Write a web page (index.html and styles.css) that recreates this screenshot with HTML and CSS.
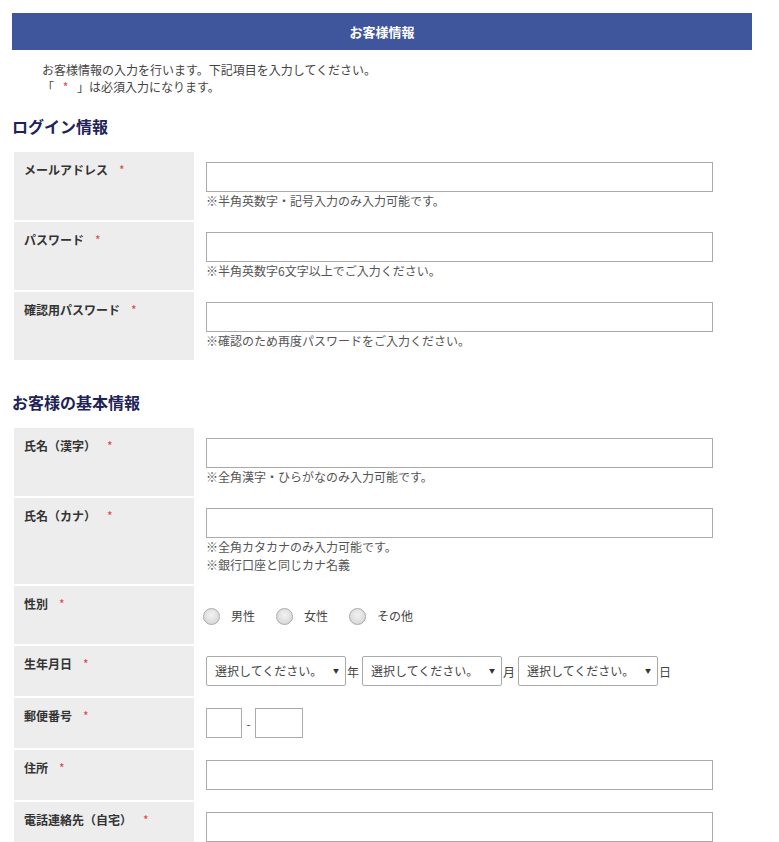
FILE: index.html
```html
<!DOCTYPE html>
<html lang="ja">
<head>
<meta charset="utf-8">
<title>お客様情報</title>
<link rel="stylesheet" href="styles.css">
</head>
<body>
<div class="page">
  <div class="title-bar">お客様情報</div>
  <div class="intro">
    <p>お客様情報の入力を行います。下記項目を入力してください。</p>
    <p>「 <span class="req-inline">*</span> 」は必須入力になります。</p>
  </div>

  <h2 class="section-title">ログイン情報</h2>
  <table class="form-table">
    <tr>
      <th>メールアドレス<span class="req">*</span></th>
      <td><input class="text-input" type="text"><p class="note">※半角英数字・記号入力のみ入力可能です。</p></td>
    </tr>
    <tr>
      <th>パスワード<span class="req">*</span></th>
      <td><input class="text-input" type="text"><p class="note">※半角英数字6文字以上でご入力ください。</p></td>
    </tr>
    <tr>
      <th>確認用パスワード<span class="req">*</span></th>
      <td><input class="text-input" type="text"><p class="note">※確認のため再度パスワードをご入力ください。</p></td>
    </tr>
  </table>

  <h2 class="section-title second">お客様の基本情報</h2>
  <table class="form-table">
    <tr>
      <th>氏名（漢字）<span class="req">*</span></th>
      <td><input class="text-input" type="text"><p class="note">※全角漢字・ひらがなのみ入力可能です。</p></td>
    </tr>
    <tr>
      <th>氏名（カナ）<span class="req">*</span></th>
      <td><input class="text-input" type="text"><p class="note">※全角カタカナのみ入力可能です。</p><p class="note">※銀行口座と同じカナ名義</p></td>
    </tr>
    <tr>
      <th>性別<span class="req">*</span></th>
      <td>
        <div class="radios">
          <label class="radio"><span class="radio-dot"></span>男性</label>
          <label class="radio"><span class="radio-dot"></span>女性</label>
          <label class="radio"><span class="radio-dot"></span>その他</label>
        </div>
      </td>
    </tr>
    <tr>
      <th>生年月日<span class="req">*</span></th>
      <td>
        <div class="date-row">
          <span class="select">選択してください。</span><span class="unit">年</span>
          <span class="select">選択してください。</span><span class="unit">月</span>
          <span class="select">選択してください。</span><span class="unit">日</span>
        </div>
      </td>
    </tr>
    <tr>
      <th>郵便番号<span class="req">*</span></th>
      <td>
        <div class="zip-row">
          <input class="text-input zip1" type="text"><span class="dash">-</span><input class="text-input zip2" type="text">
        </div>
      </td>
    </tr>
    <tr>
      <th>住所<span class="req">*</span></th>
      <td><input class="text-input" type="text"></td>
    </tr>
    <tr>
      <th>電話連絡先（自宅）<span class="req">*</span></th>
      <td><input class="text-input" type="text"></td>
    </tr>
  </table>
</div>
</body>
</html>
```

FILE: styles.css
```css
* { box-sizing: border-box; }
html, body { margin: 0; padding: 0; background: #fff; }
body {
  font-family: "Noto Sans CJK JP", "Noto Sans", sans-serif;
  font-size: 12px;
  color: #333;
}
.page {
  padding: 13px 27px 0 12px;
}
.title-bar {
  height: 37px;
  width: 740px;
  background: #3f559c;
  color: #fff;
  font-weight: bold;
  font-size: 13px;
  line-height: 37px;
  text-align: center;
}
.intro {
  padding: 11px 0 0 30px;
  color: #444;
}
.intro p {
  margin: 0;
  line-height: 17px;
}
.req-inline { color: #e0453f; padding: 0 6px; }
.section-title {
  margin: 19px 0 0;
  font-size: 16px;
  line-height: 24px;
  font-weight: bold;
  color: #1d2258;
}
.section-title.second { margin-top: 28px; }
.form-table {
  border-collapse: separate;
  border-spacing: 2px;
  margin-top: 12px;
  margin-left: 0;
}
.form-table th {
  width: 180px;
  background: #ededed;
  text-align: left;
  vertical-align: top;
  font-weight: bold;
  font-size: 12px;
  line-height: 18px;
  padding: 9px 10px 10px 10px;
  color: #333;
}
.form-table td {
  vertical-align: top;
  padding: 10px 10px 10px 10px;
  width: 540px;
}
.req {
  color: #e0453f;
  font-weight: normal;
  margin-left: 11px;
}
.text-input {
  display: block;
  width: 507px;
  height: 30px;
  border: 1px solid #aaa;
  border-radius: 0;
  margin: 0;
  padding: 0 6px;
  font: inherit;
  background: #fff;
}
.note {
  margin: 0;
  line-height: 18px;
  color: #555;
  font-size: 12px;
}
.radios {
  display: flex;
  align-items: center;
  height: 18px;
  margin: 11px 0 9px -3px;
}
.radio {
  display: flex;
  align-items: center;
  color: #444;
  margin-right: 21px;
  line-height: 18px;
}
.radio-dot {
  width: 17px;
  height: 17px;
  border-radius: 50%;
  border: 1px solid #a9a9a9;
  background: radial-gradient(circle at 50% 40%, #f2f2f2 0%, #dedede 60%, #cfcfcf 100%);
  margin-right: 11px;
}
.date-row {
  display: flex;
  align-items: center;
}
.select {
  position: relative;
  display: block;
  width: 140px;
  height: 30px;
  border: 1px solid #aaa;
  border-radius: 2px;
  background: #fff;
  padding-left: 8px;
  line-height: 28px;
  color: #444;
}
.select::after {
  content: "▼";
  position: absolute;
  right: 6px;
  top: 0;
  font-size: 6px;
  line-height: 28px;
  color: #333;
}
.unit {
  width: 16px;
  padding-left: 1px;
  color: #444;
}
.zip-row {
  display: flex;
  align-items: center;
}
.text-input.zip1 { width: 36px; }
.text-input.zip2 { width: 48px; }
.dash {
  width: 13px;
  text-align: center;
  color: #444;
}
```
